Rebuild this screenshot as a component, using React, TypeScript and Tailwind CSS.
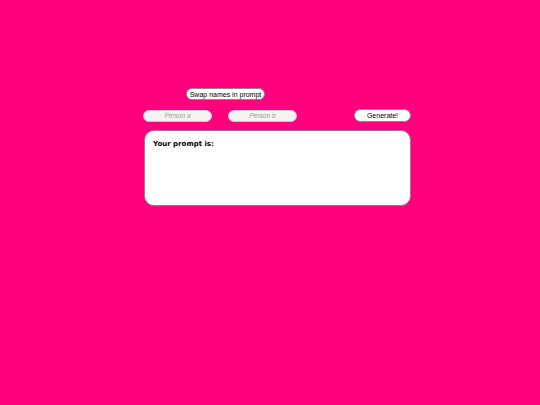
import { useState } from 'react';

export default function App() {
  const [personA, setPersonA] = useState('');
  const [personB, setPersonB] = useState('');
  const [prompt, setPrompt] = useState('');

  const generate = () => {
    setPrompt(personA && personB ? `${personA} and ${personB}` : '');
  };

  const swap = () => {
    setPersonA(personB);
    setPersonB(personA);
  };

  return (
    <div className="min-h-[405px] w-full bg-[#ff007f] pl-[143px] pt-[88px] font-['Liberation_Sans',Arial,sans-serif]">
      <div className="w-[268px]">
        <button
          onClick={swap}
          className="ml-[43px] flex h-[12px] w-[79px] items-center justify-center rounded-full border border-[#8a8a8a] bg-white text-[7px] leading-none text-black"
        >
          Swap names in prompt
        </button>

        <div className="mt-[9px] flex items-center">
          <input
            value={personA}
            onChange={(e) => setPersonA(e.target.value)}
            placeholder="Person a"
            className="h-[12px] w-[69px] rounded-full border border-[#c8c8c8] bg-[#f3f3f3] text-center text-[6.5px] italic text-[#555] outline-none placeholder:text-[#9a9a9a]"
          />
          <input
            value={personB}
            onChange={(e) => setPersonB(e.target.value)}
            placeholder="Person b"
            className="ml-[16px] h-[12px] w-[69px] rounded-full border border-[#c8c8c8] bg-[#f3f3f3] text-center text-[6.5px] italic text-[#555] outline-none placeholder:text-[#9a9a9a]"
          />
          <button
            onClick={generate}
            className="ml-auto flex h-[13px] w-[57px] items-center justify-center rounded-full border border-[#8a8a8a] bg-white text-[7px] leading-none text-black"
          >
            Generate!
          </button>
        </div>

        <div className="ml-[1px] mt-[8px] h-[76px] w-[267px] rounded-[10px] border border-[#9a7a8a] bg-white px-[8px] pt-[10px] font-['DejaVu_Sans',Verdana,sans-serif]">
          <p className="text-[7px] font-bold leading-none text-black">Your prompt is:</p>
          {prompt && <p className="mt-[4px] text-[7px] leading-tight text-black">{prompt}</p>}
        </div>
      </div>
    </div>
  );
}
